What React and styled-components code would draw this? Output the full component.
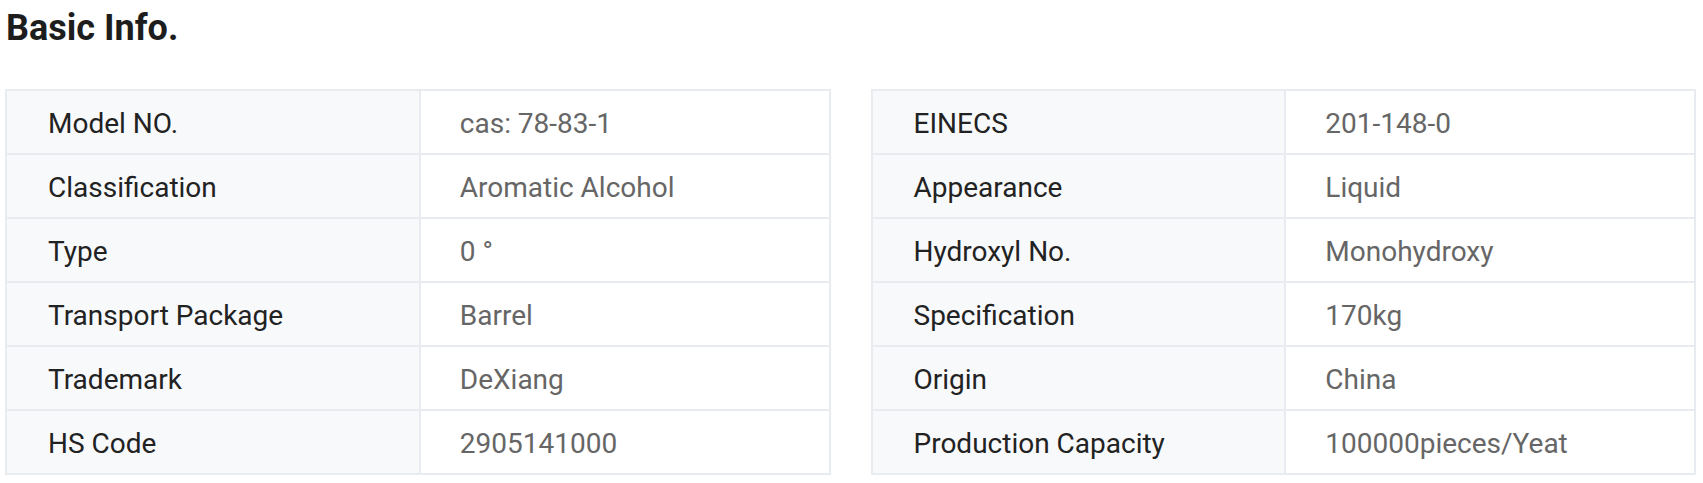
import React from 'react'
import styled, { createGlobalStyle } from 'styled-components'

const GlobalStyle = createGlobalStyle`
    body {
        margin: 0;
        background: #fff;
        font-family: Roboto, "Liberation Sans", Arial, sans-serif;
    }
`

const left = [
    ["Model NO.", "cas: 78-83-1"],
    ["Classification", "Aromatic Alcohol"],
    ["Type", "0 °"],
    ["Transport Package", "Barrel"],
    ["Trademark", "DeXiang"],
    ["HS Code", "2905141000"],
]

const right = [
    ["EINECS", "201-148-0"],
    ["Appearance", "Liquid"],
    ["Hydroxyl No.", "Monohydroxy"],
    ["Specification", "170kg"],
    ["Origin", "China"],
    ["Production Capacity", "100000pieces/Yeat"],
]

const InfoTable = ({ rows }) => (
    <Table>
        {rows.map(([label, value]) => (
            <React.Fragment key={label}>
                <Cell $label>{label}</Cell>
                <Cell>{value}</Cell>
            </React.Fragment>
        ))}
    </Table>
)

export default function App() {
    return (
        <Page>
            <GlobalStyle />
            <Title>Basic Info.</Title>
            <Tables>
                <InfoTable rows={left} />
                <InfoTable rows={right} />
            </Tables>
        </Page>
    )
}

const Page = styled.div`
    padding: 7px 7px 0 5px;
`

const Title = styled.h2`
    margin: 0 0 0 1px;
    font-size: 36px;
    line-height: 42px;
    font-weight: 700;
    color: #1d1d1d;
`

const Tables = styled.div`
    display: grid;
    grid-template-columns: 1fr 1fr;
    column-gap: 40px;
    margin-top: 40px;
`

const Table = styled.div`
    display: grid;
    grid-template-columns: 1.01fr 1fr;
    border-top: 2px solid #e8ebf0;
    border-left: 2px solid #e8ebf0;
`

const Cell = styled.div`
    box-sizing: border-box;
    height: 64px;
    display: flex;
    align-items: center;
    padding: 2px 0 0 ${p => (p.$label ? '41px' : '39px')};
    border-right: 2px solid #e8ebf0;
    border-bottom: 2px solid #e8ebf0;
    background: ${p => (p.$label ? '#f8f9fb' : '#fff')};
    color: ${p => (p.$label ? '#222' : '#666')};
    font-size: 28px;
    white-space: nowrap;
`
